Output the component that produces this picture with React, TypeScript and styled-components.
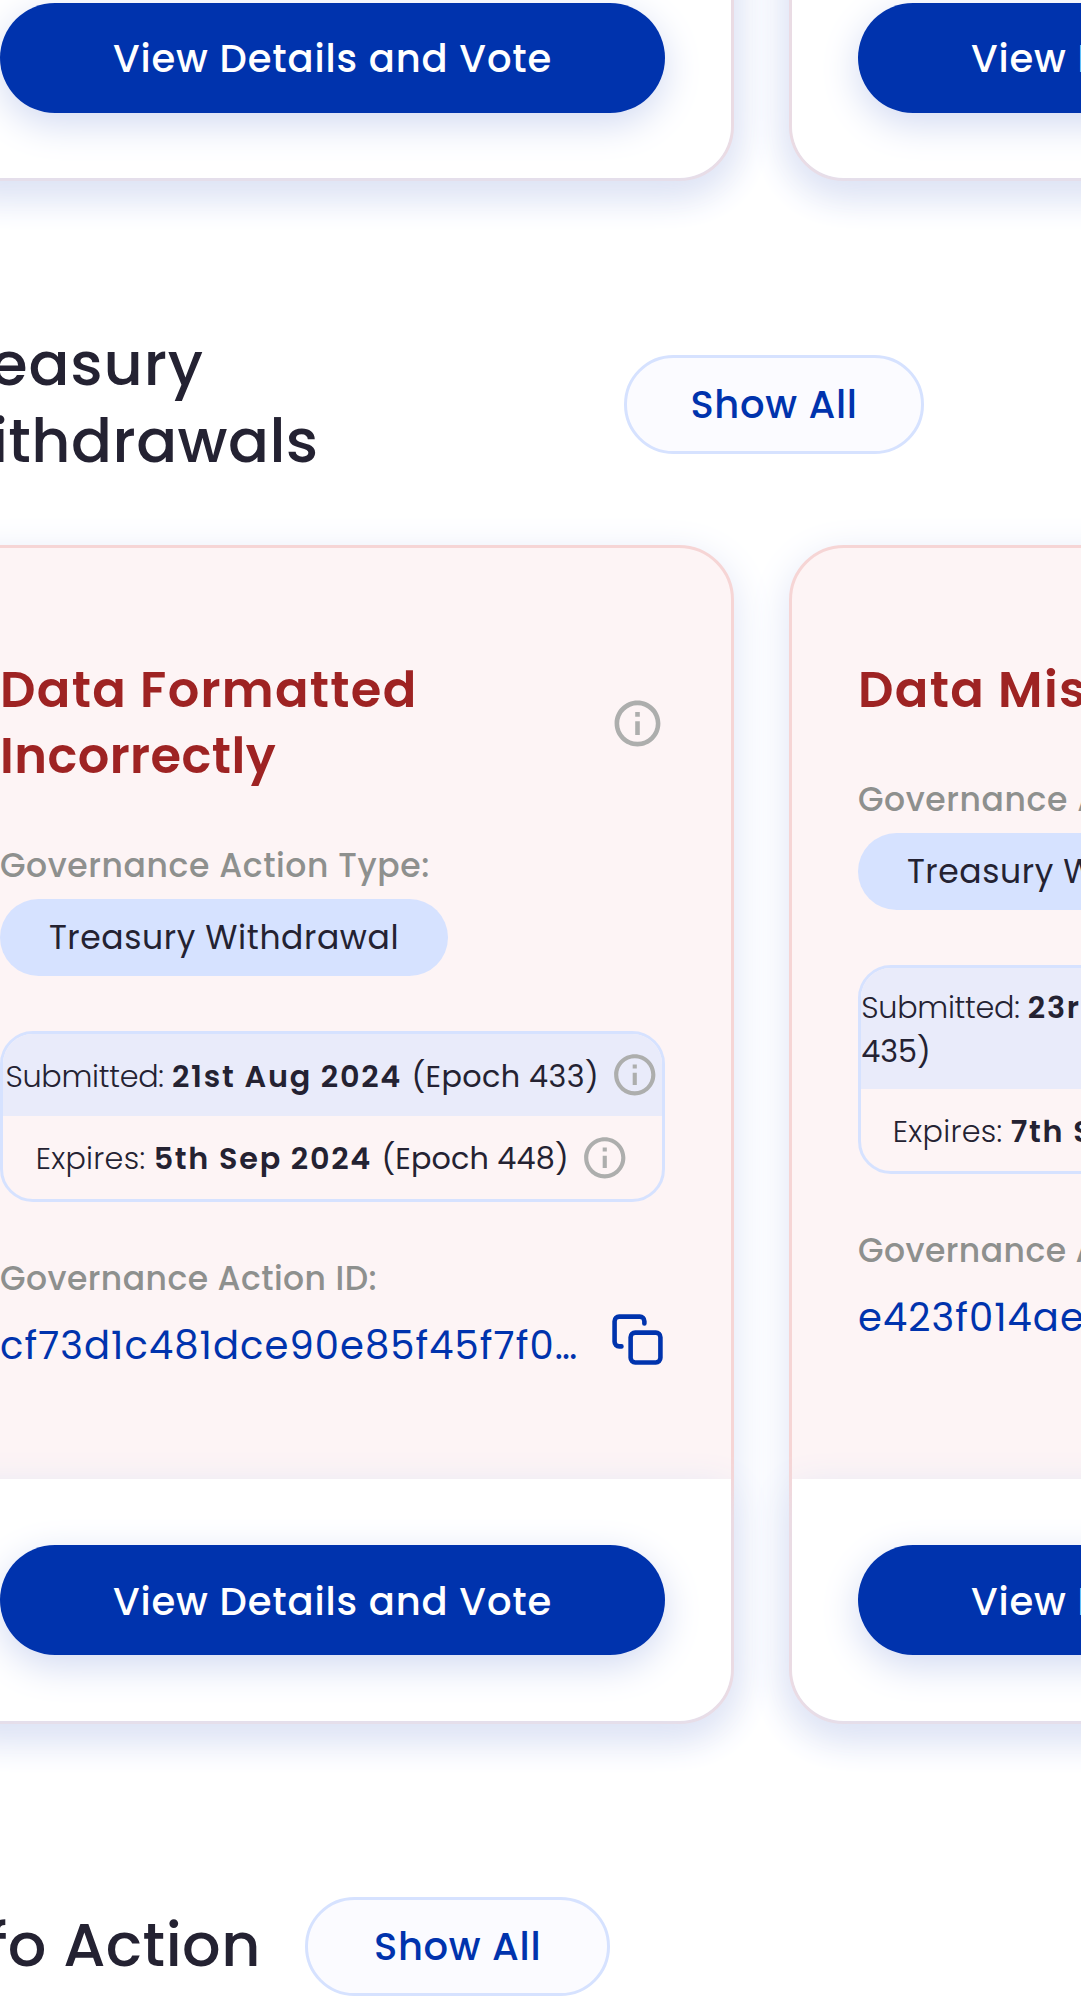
import React from 'react';
import styled, { createGlobalStyle } from 'styled-components';

const GlobalStyle = createGlobalStyle`
  *, *::before, *::after { box-sizing: border-box; }
  body {
    margin: 0;
    background: #fff;
    color: #242232;
    font-family: Poppins, Inter, sans-serif;
  }
`;

const Page = styled.main`
  width: 1081px;
  height: 1999px;
  overflow: hidden;
  display: flex;
  flex-direction: column;
`;

const Spaced = styled.span<{ $ls: number }>`
  letter-spacing: ${(p) => p.$ls}px;
`;

const CardRow = styled.div<{ $scrolled?: boolean }>`
  flex: none;
  display: flex;
  gap: 55px;
  margin: ${(p) => (p.$scrolled ? '-301.3px' : '0')} 0 0 -69px;
`;

const Card = styled.article`
  flex: none;
  display: flex;
  flex-direction: column;
  width: 803px;
  border: 3px solid #f6d5d5;
  border-radius: 55px;
  background: #fdf4f5;
  box-shadow: 0 11px 41px #dde3f5;
`;

const CardBody = styled.div<{ $height: number }>`
  height: ${(p) => p.$height}px;
  padding: 109.5px 66px 0;
`;

const CardFooter = styled.div`
  padding: 66px 66px 65.5px;
  background: #fff;
  border-radius: 0 0 52px 52px;
  box-shadow: 0 11px 41px #dde3f5;
`;

const VoteButton = styled.button`
  display: block;
  width: 100%;
  height: 110px;
  padding: 2px 0 0;
  border: 0;
  border-radius: 55px;
  background: #0033ad;
  box-shadow: 0 11px 38px #d2daf2;
  color: #fff;
  font: inherit;
  font-size: 38.5px;
  font-weight: 500;
  letter-spacing: 0.85px;
`;

const SectionHeader = styled.header<{ $top: number; $bottom: number }>`
  flex: none;
  display: flex;
  align-items: center;
  margin: ${(p) => p.$top}px 0 ${(p) => p.$bottom}px -69px;
`;

const SectionTitle = styled.h2<{ $width: number }>`
  width: ${(p) => p.$width}px;
  margin: 0;
  font-size: 60.5px;
  font-weight: 500;
  line-height: 77px;
  white-space: nowrap;
`;

const ShowAll = styled.button<{ $width: number }>`
  width: ${(p) => p.$width}px;
  height: 99px;
  margin-top: 5.5px;
  padding: 0;
  border: 3px solid #d6e2ff;
  border-radius: 50px;
  background: #fbfbff;
  color: #0033ad;
  font: inherit;
  font-size: 38.5px;
  font-weight: 500;
  letter-spacing: 0.7px;
`;

const TitleRow = styled.div`
  display: flex;
  align-items: center;
  justify-content: space-between;
`;

const CardTitle = styled.h3`
  width: 520px;
  margin: 0;
  color: #9e2323;
  font-size: 49.5px;
  font-weight: 600;
  line-height: 66px;
`;

const TitleLine = styled(Spaced)`
  display: block;
`;

const Label = styled.p<{ $ls: number }>`
  margin: 55px 0 11px;
  color: #8e908e;
  font-size: 33px;
  font-weight: 500;
  line-height: 44px;
  letter-spacing: ${(p) => p.$ls}px;
`;

const TypePill = styled.div`
  display: flex;
  align-items: center;
  justify-content: center;
  width: 448px;
  height: 76.5px;
  padding-top: 2px;
  border-radius: 39px;
  background: #d6e2ff;
  font-size: 33px;
  letter-spacing: 0.6px;
`;

const Dates = styled.div`
  margin-top: 55px;
  border: 3px solid #d6e2ff;
  border-radius: 33px;
  overflow: hidden;
`;

const DateRow = styled.div<{ $tinted?: boolean }>`
  display: flex;
  align-items: center;
  justify-content: center;
  gap: 11px;
  min-height: 82.5px;
  padding: 16.5px 0;
  background: ${(p) => (p.$tinted ? '#e9ebfa' : 'transparent')};
`;

const DateText = styled.div<{ $wrap?: boolean }>`
  width: ${(p) => (p.$wrap ? '598px' : 'auto')};
  margin: 2px 0 -2px;
  padding-right: ${(p) => (p.$wrap ? '20px' : '0')};
  font-size: 30.25px;
  font-weight: 300;
  line-height: 44px;
  white-space: ${(p) => (p.$wrap ? 'normal' : 'nowrap')};
`;

const DateValue = styled.b`
  font-weight: 600;
  letter-spacing: 1.75px;
`;

const Epoch = styled(Spaced)`
  margin-left: 1px;
  font-weight: 400;
`;

const IdRow = styled.div`
  display: flex;
  align-items: flex-start;
  justify-content: space-between;
  height: 66px;
  color: #0033ad;
`;

const IdText = styled.span`
  font-size: 38.5px;
  line-height: 67.5px;
  letter-spacing: 1.07px;
  white-space: nowrap;
`;

const Icon = styled.svg`
  flex: none;
  display: block;
`;

const InfoIcon = ({ size }: { size: number }) => (
  <Icon width={size} height={size} viewBox="0 0 24 24" fill="#adaead">
    <path d="M11 7h2v2h-2zm0 4h2v6h-2zm1-9C6.48 2 2 6.48 2 12s4.48 10 10 10 10-4.48 10-10S17.52 2 12 2zm0 18c-4.41 0-8-3.59-8-8s3.59-8 8-8 8 3.59 8 8-3.59 8-8 8z" />
  </Icon>
);

const CopyIcon = () => (
  <Icon width={55} height={55} viewBox="0 0 24 24" fill="none" stroke="#0033ad" strokeWidth={2} strokeLinecap="round" strokeLinejoin="round">
    <rect x="9" y="9" width="13" height="13" rx="2" />
    <path d="M5 15H4a2 2 0 0 1-2-2V4a2 2 0 0 1 2-2h9a2 2 0 0 1 2 2v1" />
  </Icon>
);

type Run = [text: string, spacing: number];

type Action = {
  title: Run[];
  submitted: [string, Run];
  expires: [string, Run];
  id: string;
  wrap?: boolean;
};

const actions: Action[] = [
  {
    title: [['Data Formatted', 1.3], ['Incorrectly', 0.45]],
    submitted: ['21st Aug 2024', ['(Epoch 433)', 0.4]],
    expires: ['5th Sep 2024', ['(Epoch 448)', 0.15]],
    id: 'cf73d1c481dce90e85f45f7f0…',
  },
  {
    title: [['Data Missing', 1.3]],
    submitted: ['23rd Aug 2024', ['(Epoch 435)', 0]],
    expires: ['7th Sep 2024', ['(Epoch 450)', 0.6]],
    id: 'e423f014ae…',
    wrap: true,
  },
];

const ActionCard = ({ action }: { action?: Action }) => (
  <Card>
    <CardBody $height={action ? 931.5 : 235}>
      {action && (
        <>
          <TitleRow>
            <CardTitle>
              {action.title.map(([text, ls]) => (
                <TitleLine key={text} $ls={ls}>{text}</TitleLine>
              ))}
            </CardTitle>
            <InfoIcon size={55} />
          </TitleRow>
          <Label $ls={0.6}>Governance Action Type:</Label>
          <TypePill>Treasury Withdrawal</TypePill>
          <Dates>
            <DateRow $tinted>
              <DateText $wrap={action.wrap}>
                <Spaced $ls={-0.28}>Submitted:</Spaced> <DateValue>{action.submitted[0]}</DateValue>{' '}
                <Epoch $ls={action.submitted[1][1]}>{action.submitted[1][0]}</Epoch>
              </DateText>
              <InfoIcon size={49.5} />
            </DateRow>
            <DateRow>
              <DateText>
                <Spaced $ls={0.3}>Expires:</Spaced> <DateValue>{action.expires[0]}</DateValue>{' '}
                <Epoch $ls={action.expires[1][1]}>{action.expires[1][0]}</Epoch>
              </DateText>
              <InfoIcon size={49.5} />
            </DateRow>
          </Dates>
          <Label $ls={0.45}>Governance Action ID:</Label>
          <IdRow>
            <IdText>{action.id}</IdText>
            <CopyIcon />
          </IdRow>
        </>
      )}
    </CardBody>
    <CardFooter>
      <VoteButton>View Details and Vote</VoteButton>
    </CardFooter>
  </Card>
);

export default function App() {
  return (
    <>
      <GlobalStyle />
      <Page>
        <CardRow $scrolled>
          <ActionCard />
          <ActionCard />
        </CardRow>
        <SectionHeader $top={143.3} $bottom={66}>
          <SectionTitle $width={693.3}>
            <Spaced $ls={0.9}>Treasury</Spaced>
            <br />
            <Spaced $ls={0.45}>Withdrawals</Spaced>
          </SectionTitle>
          <ShowAll $width={299.5}>Show All</ShowAll>
        </SectionHeader>
        <CardRow>
          {actions.map((a) => (
            <ActionCard key={a.id} action={a} />
          ))}
        </CardRow>
        <SectionHeader $top={168.3} $bottom={0}>
          <SectionTitle $width={374.4}>
            <Spaced $ls={0.5}>Info Action</Spaced>
          </SectionTitle>
          <ShowAll $width={304.5}>Show All</ShowAll>
        </SectionHeader>
      </Page>
    </>
  );
}
